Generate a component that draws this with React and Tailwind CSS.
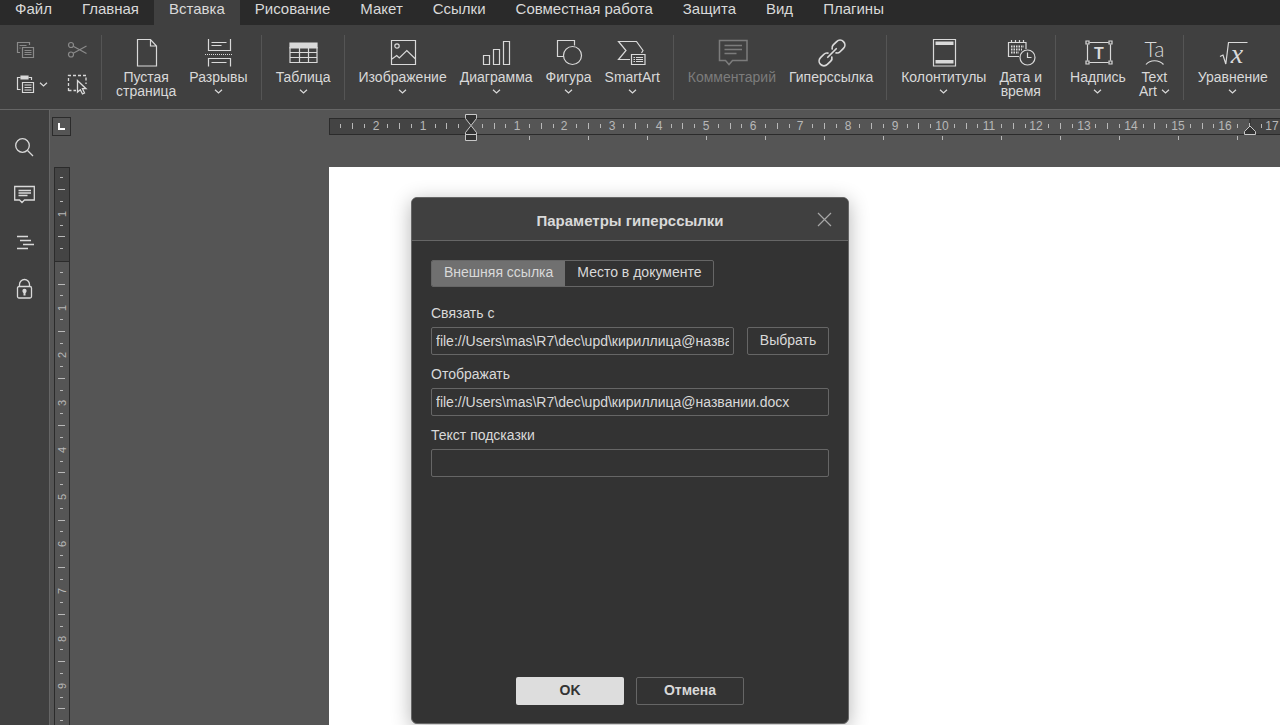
import { useState } from 'react';

const CM = 47.2;

const tabs = [
  'Файл',
  'Главная',
  'Вставка',
  'Рисование',
  'Макет',
  'Ссылки',
  'Совместная работа',
  'Защита',
  'Вид',
  'Плагины',
];

const Icon = ({ children }) => (
  <svg className="w-7 h-7 overflow-visible" viewBox="0 0 28 28" fill="none" stroke="currentColor" strokeWidth="1.2" aria-hidden="true">
    {children}
  </svg>
);

const Chevron = () => (
  <svg className="w-[9px] h-[5px]" viewBox="0 0 9 5" fill="none" stroke="currentColor" strokeWidth="1.2" aria-hidden="true">
    <path d="M1 .8l3.5 3.2L8 .8" />
  </svg>
);

const icons = {
  page: (
    <Icon>
      <path d="M5.5.5h13l6 6.5v20h-19zM18.5.5V7h6" />
    </Icon>
  ),
  breaks: (
    <Icon>
      <path d="M4.5 0v11.5h22V0M7.5 3.5h15M7.5 6.5h10M4.5 27.5v-8h22v8M7.5 23.5h15" />
      <path d="M1 15.5h27" strokeDasharray="1 1" />
    </Icon>
  ),
  table: (
    <Icon>
      <path d="M1 4h27v5H1z" fill="currentColor" />
      <path d="M1 8.5h27v15H1zM1 13.5h27M1 18.5h27M10.5 8.5v15M19.5 8.5v15" />
    </Icon>
  ),
  image: (
    <Icon>
      <path d="M2.5 1.5h24v24h-24zM3 20l4.7-3.5 2.6 2.5 7.5-7.5 8.7 8.5" />
      <circle cx="8" cy="7" r="2.2" />
    </Icon>
  ),
  chart: (
    <Icon>
      <path d="M1.5 16.5h6v9h-6zM11.5 10.5h6v15h-6zM21.5 2.5h6v23h-6z" />
    </Icon>
  ),
  shape: (
    <Icon>
      <path d="M8.5 17.5h-6v-16h17v5" />
      <circle cx="17.5" cy="16.5" r="9" />
    </Icon>
  ),
  smartart: (
    <Icon>
      <path d="M12 20.5H.5l7.5-9-7.5-9h18l6.5 9-1.5 2.5M13.5 15.5h13.5v10H13.5z" />
      <path d="M15.5 18.5h1.5M18 18.5h7M15.5 20.5h1.5M18 20.5h7M15.5 22.5h1.5M18 22.5h7" />
    </Icon>
  ),
  comment: (
    <Icon>
      <path d="M1.5 1.5H29v20H14.5l-3.5 4-3.5-4h-6z" strokeWidth="1.5" />
      <path d="M6.5 6.5H24M6.5 10.5H24M6.5 14.5h12" strokeWidth="1.5" />
    </Icon>
  ),
  link: (
    <Icon>
      <g strokeWidth="1.7" strokeLinecap="round" transform="rotate(-45 15 14)">
        <path d="M12 16.8c-.8 1.3-2 2-3.6 2H3.6a4.8 4.8 0 0 1 0-9.6h4.8c1.6 0 2.8.7 3.6 2" />
        <path d="M18 16.8c.8 1.3 2 2 3.6 2h4.8a4.8 4.8 0 0 0 0-9.6h-4.8c-1.6 0-2.8.7-3.6 2" />
        <path d="M9 14h12" />
      </g>
    </Icon>
  ),
  header: (
    <Icon>
      <path d="M3.5.5h22V27h-22z" />
      <path d="M5.5 2.5h18V6h-18zM5.5 21h18v3.5h-18z" fill="currentColor" stroke="none" />
    </Icon>
  ),
  date: (
    <Icon>
      <path d="M12 17.5H1.5v-14H19V10M4.5 1v3M8.5 1v3M12.5 1v3M16.5 1v3" />
      <path d="M4 7.5h13M4 10.5h11M4 13.5h8" strokeWidth="2" strokeDasharray="1.5 1" />
      <circle cx="20.5" cy="18.5" r="7.5" />
      <path d="M20.5 13.5v5h4" />
    </Icon>
  ),
  textbox: (
    <Icon>
      <path d="M5.5 3.5h19M5.5 23.5h19M3.5 5.500v16M26.5 5.5v16" />
      <path d="M2 2h3v3H2zM25 2h3v3h-3zM2 22h3v3H2zM25 22h3v3h-3z" />
      <text x="15" y="19.5" textAnchor="middle" fill="currentColor" stroke="none" className="font-bold text-[16px]">T</text>
    </Icon>
  ),
  textart: (
    <Icon>
      <text x="14.5" y="18" textAnchor="middle" fill="currentColor" stroke="none" className="font-['Lato'] font-light text-[21px]">Ta</text>
      <path d="M6 25.5c4-5 13-5 17.500 0" />
    </Icon>
  ),
  equation: (
    <Icon>
      <path d="M1 17.5l3-1.5 2.8 9L9.5 3.5h19" />
      <text x="18" y="23.5" textAnchor="middle" fill="currentColor" stroke="none" className="font-['Liberation_Serif'] italic text-[28px]">x</text>
    </Icon>
  ),
};

const groups = [
  [
    { icon: 'page', lines: ['Пустая', 'страница'] },
    { icon: 'breaks', lines: ['Разрывы'], menu: true },
  ],
  [{ icon: 'table', lines: ['Таблица'], menu: true }],
  [
    { icon: 'image', lines: ['Изображение'], menu: true },
    { icon: 'chart', lines: ['Диаграмма'], menu: true },
    { icon: 'shape', lines: ['Фигура'], menu: true },
    { icon: 'smartart', lines: ['SmartArt'], menu: true },
  ],
  [
    { icon: 'comment', lines: ['Комментарий'], disabled: true },
    { icon: 'link', lines: ['Гиперссылка'] },
  ],
  [
    { icon: 'header', lines: ['Колонтитулы'], menu: true },
    { icon: 'date', lines: ['Дата и', 'время'] },
  ],
  [
    { icon: 'textbox', lines: ['Надпись'], menu: true },
    { icon: 'textart', lines: ['Text', 'Art'], menu: true },
  ],
  [{ icon: 'equation', lines: ['Уравнение'], menu: true }],
];

const ToolButton = ({ icon, lines, menu, disabled }) => (
  <button
    type="button"
    disabled={disabled}
    className="flex flex-col items-center shrink-0 pl-[7px] pr-1.5 pt-1 text-sm leading-[14px] whitespace-nowrap disabled:text-[#7c7c7c]"
  >
    {icons[icon]}
    <span className="mt-[3px]">{lines[0]}</span>
    <span className="flex items-center gap-1 h-3.5">
      {lines[1]}
      {menu && <Chevron />}
    </span>
  </button>
);

const Clipboard = () => (
  <div className="grid grid-cols-[51px_34px] grid-rows-[35px_34px] shrink-0 pl-4 -mt-[3px]">
    <button type="button" aria-label="Копировать" disabled className="flex items-center text-[#8a8a8a]">
      <svg className="w-5 h-5" viewBox="0 0 20 20" fill="none" stroke="currentColor" strokeWidth="1.2">
        <path d="M4 12.5H1.5v-10h12V5M3.5 5.5h7M3.5 8h1" />
        <path d="M6.5 7.5h11v10h-11zM8.5 10.5h7M8.5 12.5h7M8.5 14.5h7" />
      </svg>
    </button>
    <button type="button" aria-label="Вырезать" disabled className="flex items-center text-[#8a8a8a]">
      <svg className="w-[21px] h-5" viewBox="0 0 21 20" fill="none" stroke="currentColor" strokeWidth="1.2">
        <circle cx="4" cy="5" r="2.5" />
        <circle cx="4" cy="14.500" r="2.5" />
        <path d="M6.200 6.300L19.500 13.500M6.200 13.200L19.500 6" />
      </svg>
    </button>
    <button type="button" aria-label="Вставить" className="flex items-center gap-[3px]">
      <svg className="w-5 h-5" viewBox="0 0 20 20" fill="none" stroke="currentColor" strokeWidth="1.2">
        <path d="M4.5 15.5h-3v-12h3M12.5 3.5h3V6" />
        <path d="M5 2h7v3H5z" fill="currentColor" />
        <path d="M6.5 8.5h11v10h-11zM8.5 11h7M8.5 13.5h7M8.5 16h7" />
      </svg>
      <Chevron />
    </button>
    <button type="button" aria-label="Выделить" className="flex items-center">
      <svg className="w-[21px] h-[21px]" viewBox="0 0 21 21" fill="none" stroke="currentColor" strokeWidth="1.3">
        <path d="M1.5 17V1.5H19V10M1.5 16.5H9" strokeDasharray="3 2" />
        <path d="M10.5 6.5V18l2.8-2.300 2.200 4.300 2-1-2-4.300H19z" />
      </svg>
    </button>
  </div>
);

// scale marks between two page offsets, in quarters of a centimetre
const marks = (from, to) => {
  const list = [];
  for (let q = from; q <= to; q++) {
    if (q !== 0) list.push({ q, pos: Math.round((q * CM) / 4), whole: q % 4 === 0, half: q % 4 !== 0 && q % 2 === 0 });
  }
  return list;
};

// how many steps of the given size fit between a ruler's zero and the window edge
const stepsToEdge = (size, zero, step) => Math.floor((size - zero) / step);

const HorizontalRuler = () => (
  <svg className="w-full h-[57px] text-xs" aria-label="Линейка">
    <path d="M0 8.5h4000v16H0z" fill="#555" stroke="#2b2b2b" />
    <path d="M.5 8.5H142v16H.5zM921 8.5h3079v16H921z" fill="#444" stroke="#2b2b2b" />
    <g transform="translate(142 0)">
      {marks(-11, stepsToEdge(window.innerWidth, 471, CM / 4)).map(({ q, pos, whole, half }) =>
        whole ? (
          <text key={q} x={pos - 1} y="20" textAnchor="middle" fill="#b8b8b8">
            {Math.abs(q / 4)}
          </text>
        ) : (
          <rect key={q} x={pos - 1} y={half ? 13 : 14} width="1" height={half ? 6 : 4} fill="#b8b8b8" />
        )
      )}
      {Array.from({ length: stepsToEdge(window.innerWidth, 471, 59) }, (_, i) => (
        <rect key={i} x={(i + 1) * 59 - 1} y="26" width="1" height="4" fill="#b8b8b8" />
      ))}
    </g>
    <g fill="#333" stroke="#c8c8c8">
      <path d="M136.5 4.5h11v4l-5.5 7-5.5-7zM142 15.5l5.5 7v2h-11v-2z" />
      <path d="M136.5 24.5h11v6h-11zM921 16l5.5 5.5v3h-11v-3z" />
    </g>
  </svg>
);

const VerticalRuler = () => (
  <svg className="w-4 h-full ml-1 text-[11px]" aria-label="Вертикальная линейка">
    <path d="M.5.5h15v4000H.5z" fill="#555" stroke="#2b2b2b" />
    <path d="M.5.5h15v94H.5z" fill="#444" stroke="#2b2b2b" />
    <g transform="translate(0 94)">
      {marks(-7, stepsToEdge(window.innerHeight, 261, CM / 4)).map(({ q, pos, whole, half }) =>
        whole ? (
          <text key={q} transform={`translate(12 ${pos}) rotate(-90)`} textAnchor="middle" fill="#b8b8b8">
            {Math.abs(q / 4)}
          </text>
        ) : (
          <rect key={q} x={half ? 4 : 6} y={pos - 1} width={half ? 7 : 3} height="1" fill="#b8b8b8" />
        )
      )}
    </g>
  </svg>
);

const sideItems = [
  {
    label: 'Поиск',
    art: (
      <>
        <circle cx="8.500" cy="8.5" r="6.8" />
        <path d="M13.500 13.5l5.500 5.5" />
      </>
    ),
  },
  {
    label: 'Комментарии',
    art: <path d="M.7 2.5h19.6V16h-9.8L8 18.5 5.500 16H.7zM4.5 6.5H17M4.5 9H17M4.5 11.5h9" />,
  },
  { label: 'Заголовки', art: <path d="M3 5.500h11M6 9.500h11M9 13.500h11M3 17.500h11" /> },
  {
    label: 'Защита документа',
    art: (
      <>
        <path d="M5.5 8.5V6.500a5 5 0 0 1 10 0v2" />
        <rect x="3.5" y="8.5" width="14" height="11.500" rx="1.500" />
        <circle cx="10.500" cy="13" r="1.500" fill="currentColor" />
        <path d="M10.5 13v4.500" strokeWidth="2" />
      </>
    ),
  },
];

const inputClass = 'w-full min-w-0 h-7 px-1 rounded-xs border border-[#666] bg-transparent text-sm outline-none';

const LinkDialog = () => {
  const [mode, setMode] = useState('external');
  const [url, setUrl] = useState('file://Users\\mas\\R7\\dec\\upd\\кириллица@названии.docx');
  const [display, setDisplay] = useState('file://Users\\mas\\R7\\dec\\upd\\кириллица@названии.docx');
  const [tip, setTip] = useState('');

  return (
    <section
      role="dialog"
      aria-labelledby="dlg-title"
      className="absolute left-[411px] top-[197px] w-[438px] h-[527px] flex flex-col rounded-md border border-[#666] bg-[#333] overflow-hidden shadow-[0_4px_20px_rgba(0,0,0,0.3)] text-sm"
    >
      <header className="relative flex items-center justify-center h-[43px] shrink-0 pt-1 bg-[#404040] border-b border-[#666]">
        <h2 id="dlg-title" className="font-bold text-[15px]">Параметры гиперссылки</h2>
        <button type="button" aria-label="Закрыть" className="absolute right-4 top-3.5 text-[#a6a6a6]">
          <svg className="w-[15px] h-[15px]" viewBox="0 0 15 15" fill="none" stroke="currentColor" strokeWidth="1.2">
            <path d="M1 1l13 13M14 1L1 14" />
          </svg>
        </button>
      </header>

      <form className="flex flex-col flex-1 px-[19px] pt-[19px] pb-[18px]" onSubmit={(e) => e.preventDefault()}>
        <div className="flex self-start h-[27px] rounded-xs border border-[#666] overflow-hidden">
          <button
            type="button"
            onClick={() => setMode('external')}
            className={mode === 'external' ? 'px-3 pb-[3px] bg-[#707070]' : 'px-3 pb-[3px]'}
          >
            Внешняя ссылка
          </button>
          <button
            type="button"
            onClick={() => setMode('internal')}
            className={mode === 'internal' ? 'px-3 pb-[3px] bg-[#707070]' : 'px-3 pb-[3px]'}
          >
            Место в документе
          </button>
        </div>

        <label htmlFor="link-url" className="mt-4">Связать с</label>
        <div className="flex gap-[13px] mt-1">
          <input id="link-url" className={inputClass} value={url} onChange={(e) => setUrl(e.target.value)} />
          <button type="button" className="w-[82px] h-7 shrink-0 pb-0.5 rounded-xs border border-[#666]">Выбрать</button>
        </div>

        <label htmlFor="link-display" className="mt-[9px] mb-1">Отображать</label>
        <input id="link-display" className={inputClass} value={display} onChange={(e) => setDisplay(e.target.value)} />

        <label htmlFor="link-tip" className="mt-[9px] mb-1">Текст подсказки</label>
        <input id="link-tip" className={inputClass} value={tip} onChange={(e) => setTip(e.target.value)} />

        <div className="flex justify-center gap-3 mt-auto font-bold">
          <button type="submit" className="w-[108px] h-7 pb-0.5 rounded-xs bg-[#ddd] text-[#333]">OK</button>
          <button type="button" className="w-[108px] h-7 pb-0.5 rounded-xs border border-[#666]">Отмена</button>
        </div>
      </form>
    </section>
  );
};

const App = () => {
  const [active, setActive] = useState('Вставка');

  return (
    <div className="relative flex flex-col h-screen overflow-hidden bg-[#555] text-[#d9d9d9] font-['Liberation_Sans',sans-serif]">
      <nav className="flex h-[25px] shrink-0 bg-[#2a2a2a] text-[15px]">
        {tabs.map((tab) => (
          <button
            key={tab}
            type="button"
            onClick={() => setActive(tab)}
            className={tab === active ? 'px-[15px] pb-[7px] leading-[18px] whitespace-nowrap bg-[#404040]' : 'px-[15px] pb-[7px] leading-[18px] whitespace-nowrap'}
          >
            {tab}
          </button>
        ))}
      </nav>

      <div className="flex h-[85px] shrink-0 pt-2.5 bg-[#404040] border-b border-[#666] overflow-hidden">
        <Clipboard />
        {groups.map((group, i) => (
          <div key={i} className="flex items-start shrink-0 h-[65px] px-[7px] border-l border-[#555]">
            {group.map((item) => (
              <ToolButton key={item.icon} {...item} />
            ))}
          </div>
        ))}
      </div>

      <div className="flex flex-1 min-h-0">
        <aside className="flex flex-col w-[50px] shrink-0 pt-3.5 bg-[#404040] border-r border-[#666]">
          {sideItems.map(({ label, art }) => (
            <button key={label} type="button" aria-label={label} className="flex items-center justify-center h-[47px]">
              <svg className="w-[21px] h-[21px]" viewBox="0 0 21 21" fill="none" stroke="currentColor" strokeWidth="1.3">
                {art}
              </svg>
            </button>
          ))}
        </aside>

        <main className="grid flex-1 min-w-0 grid-cols-[279px_minmax(0,1fr)] grid-rows-[57px_minmax(0,1fr)]">
          <div className="pl-0.5 pt-[7px]">
            <button type="button" aria-label="Табуляция" className="flex items-center justify-center w-[19px] h-[19px] border border-[#2b2b2b]">
              <svg className="w-[7px] h-[7px]" viewBox="0 0 7 7" fill="none" stroke="#fff" strokeWidth="2">
                <path d="M1 0v6h6" />
              </svg>
            </button>
          </div>
          <HorizontalRuler />
          <VerticalRuler />
          <div className="bg-white" />
        </main>
      </div>

      <LinkDialog />
    </div>
  );
};

export default App;
